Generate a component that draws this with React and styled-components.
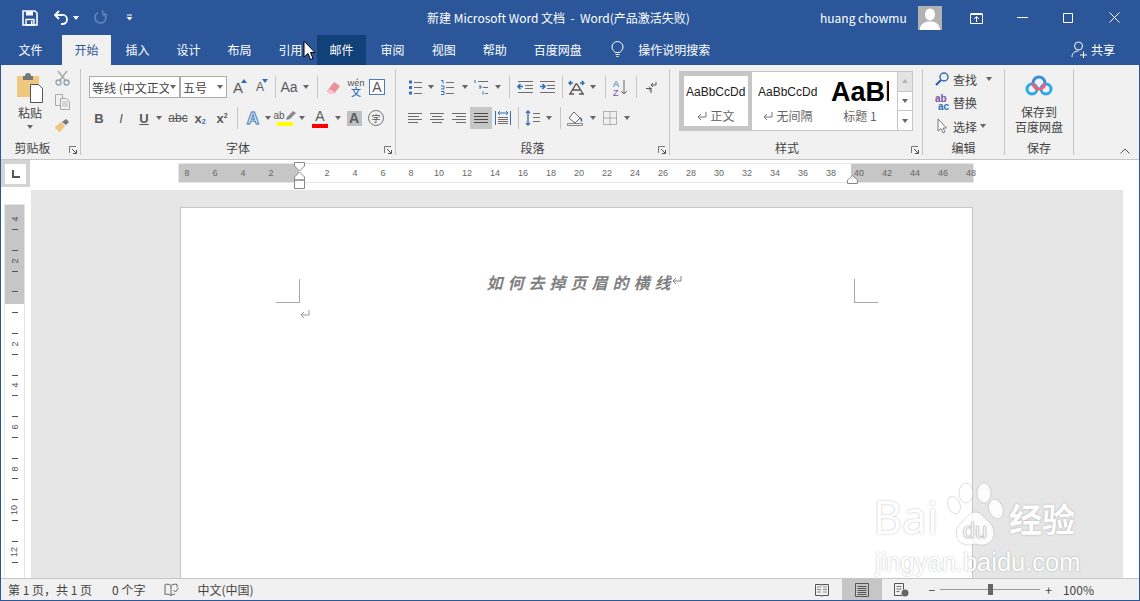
import React from 'react';
import styled, { createGlobalStyle } from 'styled-components';

const BLUE = '#2b579a';
const ICON_BLUE = '#2f6fb5';
const LINE = '#c6c6c6';
const GREY = '#666';

const Global = createGlobalStyle`
  * { box-sizing: border-box; }
  html, body { margin: 0; padding: 0; overflow: hidden; }
  body { font-family: "Noto Sans CJK SC", "Noto Sans", sans-serif; font-size: 12px; color: #444; }
`;

// small drawings

const Svg = ({ w = 16, h = 16, children, ...rest }) => (
  <svg width={w} height={h} viewBox={`0 0 ${w} ${h}`} fill="none" {...rest}>{children}</svg>
);

const Rows = ({ w = 14, h = 14, rows, color = '#6e6e6e' }) => (
  <Svg w={w} h={h}>
    <path d={rows.map(([a, b, y]) => `M${a} ${y + 0.5}H${b}`).join('')} stroke={color} />
  </Svg>
);

const SaveIcon = () => (
  <Svg>
    <path d="M1 1h12l2 2v12H1z" stroke="#fff" strokeWidth="1.6" />
    <path d="M4 1.5h7v4H4z" fill="#fff" />
    <path d="M4 9.5h8V15H4z" stroke="#fff" strokeWidth="1.4" />
    <path d="M9 11h1.5v3H9z" fill="#fff" />
  </Svg>
);

const UndoIcon = () => (
  <Svg w={16} h={15}>
    <path d="M6 1 2 5l4 4" stroke="#fff" strokeWidth="1.8" />
    <path d="M2.5 5H9a4.5 4.5 0 0 1 1 9H8" stroke="#fff" strokeWidth="1.8" />
  </Svg>
);

const RedoIcon = () => (
  <Svg w={14} h={15}>
    <path d="M9.8 3.2A5.5 5.5 0 1 1 4 2.6" stroke="#5f83b9" strokeWidth="1.7" />
    <path d="M9 0v5h4" stroke="#5f83b9" strokeWidth="1.4" transform="rotate(-8 9 4)" />
  </Svg>
);

const CustomizeIcon = () => (
  <Svg w={7} h={7}>
    <path d="M1 1h5" stroke="#fff" />
    <path d="M0.5 3h6L3.5 6.5z" fill="#fff" />
  </Svg>
);

const RestoreIcon = () => (
  <Svg w={13} h={12}>
    <path d="M.5 2.5h12v9H.5zM.5 1.5h12" stroke="#fff" />
    <path d="M6.5 10V5M4 7l2.5-2.5L9 7" stroke="#fff" />
  </Svg>
);

const MinIcon = () => <Svg w={11} h={3}><path d="M0 1.5h11" stroke="#fff" /></Svg>;
const MaxIcon = () => <Svg w={10} h={10}><path d="M.5.5h9v9h-9z" stroke="#fff" /></Svg>;
const CloseIcon = () => <Svg w={11} h={11}><path d="m.5.5 10 10M10.5.5l-10 10" stroke="#fff" /></Svg>;

const AvatarIcon = () => (
  <Svg w={24} h={24}>
    <rect width="24" height="24" fill="#b2b2b2" />
    <ellipse cx="12" cy="8.5" rx="5" ry="6" fill="#fff" />
    <path d="M2 24c0-6 4-7 7-8.5h6c3 1.5 7 2.500 7 8.500z" fill="#fff" />
  </Svg>
);

const BulbIcon = () => (
  <Svg w={13} h={17}>
    <path d="M4 11.500C3 9.500 1 9 1 6a5.500 5.500 0 0 1 11 0c0 3-2 3.500-3 5.500z" stroke="#fff" />
    <path d="M4.500 13.500h4M5.500 15.500h2" stroke="#fff" />
  </Svg>
);

const ShareIcon = () => (
  <Svg w={17} h={17}>
    <circle cx="7.500" cy="5" r="4" stroke="#fff" />
    <path d="M1 16c0-4 3-6 6.500-6M9 14h7M12.500 10.500v7" stroke="#fff" />
  </Svg>
);

const CursorIcon = () => (
  <Svg w={13} h={21}>
    <path d="M1 1v16l4-3.500 2.500 6 2.500-1-2.500-6H12z" fill="#fff" stroke="#000" />
  </Svg>
);

const PasteIcon = () => (
  <Svg w={29} h={30}>
    <path d="M1 3h22v21H1z" fill="#efc87f" />
    <path d="M7 3h2a3 3 0 0 1 6 0h2v4H7z" fill="#777" />
    <path d="M14.500 11.500h8l4 4v14h-12z" fill="#fff" stroke="#555" />
  </Svg>
);

const CutIcon = () => (
  <Svg w={15} h={16}>
    <path d="m3 1 7 9M12 1 5 10" stroke="#a9a9a9" strokeWidth="1.500" />
    <circle cx="3.500" cy="12.500" r="2.500" stroke="#8ea0ad" strokeWidth="1.300" />
    <circle cx="11.500" cy="12.500" r="2.500" stroke="#8ea0ad" strokeWidth="1.300" />
  </Svg>
);

const CopyIcon = () => (
  <Svg w={15} h={16}>
    <path d="M.5.500h7v11h-7z" fill="#f1f1f1" stroke="#aaa" />
    <path d="M5.500 4.500h6l3 3v8h-9z" fill="#f1f1f1" stroke="#aaa" />
    <path d="M7 8h6M7 10h6M7 12h6" stroke="#bbb" />
  </Svg>
);

const PainterIcon = () => (
  <Svg w={16} h={15}>
    <path d="M1 9 7 4l4 4-5 6-2-1-1-2-1 .500z" fill="#edc57e" />
    <path d="m8 4 4-3 3 3-3 3z" fill="#777" />
  </Svg>
);

const LauncherIcon = () => (
  <Svg w={8} h={8}>
    <path d="M.5 7V.5H7" stroke="#777" />
    <path d="m3 3 4 4M7.500 4v3.500H4" stroke="#555" />
  </Svg>
);

const EraserIcon = () => (
  <Svg w={17} h={17}>
    <path d="m2 12 7-9 6 4-6 8H5z" fill="#ef8f9b" />
    <path d="m2 12 3 3h4l1-1.500-5-3.500z" fill="#f7c9cf" />
  </Svg>
);

const PenMark = () => (
  <Svg w={12} h={11}>
    <path d="m1 10 1-3 6-6 3 2-6 6z" fill="#8a8a8a" />
  </Svg>
);

const BulletIcon = () => (
  <Svg>
    <path d="M1 1.500h3v3H1zM1 7h3v3H1zM1 12.500h3v3H1z" fill={ICON_BLUE} />
    <path d="M6 3.500h8M6 8.500h8M6 14.500h8" stroke="#6e6e6e" />
  </Svg>
);

const NumberIcon = () => (
  <Svg>
    <path d="M1 1.500h2v3M1 7h3v3H1M1 12.500h3v3H1" stroke={ICON_BLUE} />
    <path d="M6 3.500h8M6 8.500h8M6 14.500h8" stroke="#6e6e6e" />
  </Svg>
);

const MultiIcon = () => (
  <Svg>
    <path d="M1 1v3M5 7h2v2H5M9 12.500v3" stroke={ICON_BLUE} />
    <path d="M4 2.500h10M9 8.500h5M11 14.500h3" stroke="#6e6e6e" />
  </Svg>
);

const OutdentIcon = () => (
  <Svg>
    <path d="M6 7.500H1M3.500 5 1 7.500 3.500 10" stroke={ICON_BLUE} strokeWidth="1.600" />
    <path d="M1 2.500h15M8 6.500h8M8 9.500h8M1 13.500h15" stroke="#6e6e6e" />
  </Svg>
);

const IndentIcon = () => (
  <Svg>
    <path d="M1 7.500h5M3.500 5 6 7.500 3.500 10" stroke={ICON_BLUE} strokeWidth="1.600" />
    <path d="M1 2.500h15M8 6.500h8M8 9.500h8M1 13.500h15" stroke="#6e6e6e" />
  </Svg>
);

const ChineseLayoutIcon = () => (
  <Svg w={17} h={16}>
    <path d="M1 4h4M3 2 1 4l2 2M16 4h-4M14 2l2 2-2 2" stroke={ICON_BLUE} strokeWidth="1.400" />
    <path d="M2 15 8 5h1l6 10M5 11h7M1 15h5M11 15h5" stroke="#555" strokeWidth="1.400" />
  </Svg>
);

const SortIcon = () => (
  <Svg w={15} h={17}>
    <text x="0" y="8" fontSize="9" fontFamily="Liberation Sans" fill={ICON_BLUE}>A</text>
    <text x="0" y="16.500" fontSize="9" fontFamily="Liberation Sans" fill="#7b4fa6">Z</text>
    <path d="M11 1v14M8 12l3 3 3-3" stroke="#666" />
  </Svg>
);

const MarksIcon = () => (
  <Svg w={11} h={12}>
    <path d="M10 1v3H5M7 2 5 4l2 2" stroke="#555" />
    <path d="M0 7.500h5M3 5.500l2 2-2 2M5 7v5" stroke="#555" />
  </Svg>
);

const DistributeIcon = () => (
  <Svg w={16} h={16}>
    <path d="M.5 1v14M15.500 1v14" stroke={ICON_BLUE} />
    <path d="M3 3h10M5 1 3 3l2 2M11 1l2 2-2 2" stroke={ICON_BLUE} />
    <path d="M3 7.500h10M3 9.500h10M3 11.500h10M3 13.500h10" stroke="#6e6e6e" />
  </Svg>
);

const SpacingIcon = () => (
  <Svg w={15} h={16}>
    <path d="M3 1v14M1 3l2-2 2 2M1 13l2 2 2-2" stroke={ICON_BLUE} strokeWidth="1.300" />
    <path d="M8 3.500h7M8 7.500h7M8 11.500h7" stroke="#6e6e6e" />
  </Svg>
);

const ShadingIcon = () => (
  <Svg w={17} h={16}>
    <path d="m2 8 5-6 6 6-5 5z" fill="#fff" stroke="#666" />
    <path d="M13 7c2 1 3 3 2 5-1-1-2-2-2-5z" fill={ICON_BLUE} />
    <path d="M.5 13.500h15v2H.500z" stroke="#888" />
  </Svg>
);

const BorderIcon = () => (
  <Svg w={14} h={14}>
    <path d="M.5.500h13v13H.500zM7 .5v13M.5 7h13" stroke="#777" strokeDasharray="1 1" />
  </Svg>
);

const SearchIcon = () => (
  <Svg w={14} h={14}>
    <circle cx="9" cy="5" r="4" stroke={ICON_BLUE} strokeWidth="1.500" />
    <path d="M6 8 1 13" stroke="#2a5d9c" strokeWidth="2" />
  </Svg>
);

const SelectIcon = () => (
  <Svg w={10} h={16}>
    <path d="M1 1v12l3-2.500 2 4.500 2-1-2-4h3.500z" fill="#fff" stroke="#777" />
  </Svg>
);

const CloudIcon = () => (
  <Svg w={28} h={22}>
    <circle cx="7" cy="14" r="5" stroke="#27a8e8" strokeWidth="3" />
    <circle cx="21" cy="14" r="5" stroke="#27a8e8" strokeWidth="3" />
    <path d="M8 8a6 6 0 0 1 12 0" stroke="#2f8fe0" strokeWidth="3" />
    <path d="M8 8a6 6 0 0 0 12 0" stroke="#f25c78" strokeWidth="3" />
  </Svg>
);

const ChevronIcon = () => <Svg w={10} h={6}><path d="m.5 5.500 4.500-4.500 4.500 4.500" stroke="#555" /></Svg>;

const ReadIcon = () => (
  <Svg w={14} h={14}>
    <path d="M.5 1.500h6l.5 1 .5-1h6v11h-6l-.5 1-.5-1h-6z" stroke="#555" />
    <path d="M2 4h4M2 6.500h4M2 9h4M8 4h4M8 6.500h4M8 9h4" stroke="#888" />
  </Svg>
);

const PrintIcon = () => (
  <Svg w={14} h={14}>
    <path d="M.5.500h13v13H.500z" stroke="#555" />
    <path d="M2.500 3.500h9M2.500 5.500h9M2.500 7.500h9M2.500 9.500h9M2.500 11.500h9" stroke="#555" />
  </Svg>
);

const WebIcon = () => (
  <Svg w={15} h={14}>
    <path d="M8 12.500H.5V.500h9v6" stroke="#555" />
    <path d="M2.500 3.500h5M2.500 6h5M2.500 8.500h3" stroke="#777" />
    <circle cx="11" cy="10" r="3.500" fill="#666" />
  </Svg>
);

const ProofIcon = () => (
  <Svg w={15} h={14}>
    <path d="M7 2.500C5 1 3 1 1 1.500v10c2-.5 4-.5 6 1 1.500-1 3-1.300 4-1.400M7 2.500v10M7 2.500C9 1 11 1 13 1.500v3" stroke="#666" />
    <path d="m9.500 7 2 2 3-4" stroke="#666" />
  </Svg>
);

const ReturnMark = ({ color = '#9a9a9a' }) => (
  <Svg w={10} h={9}>
    <path d="M9 0v5H1M4 2 1 5l3 3" stroke={color} />
  </Svg>
);

const MarkerTop = () => (
  <Svg w={11} h={27}>
    <path d="M.5.500h10V4l-5 5-5-5zM5.500 10l5 5v3H.500v-3zM.5 18h10v8.500H.500z" fill="#fff" stroke="#888" />
  </Svg>
);

const MarkerRight = () => (
  <Svg w={11} h={9}>
    <path d="m5.500.5 5 4.500v3.500H.500V5z" fill="#fff" stroke="#888" />
  </Svg>
);

// window frame

const Window = styled.div`
  position: relative;
  display: flex;
  flex-direction: column;
  width: 1140px;
  height: 601px;
  background: #fff;
  border: 1px solid ${BLUE};
  border-top: 0;
  overflow: hidden;
`;

const TitleBar = styled.header`
  display: flex;
  align-items: center;
  height: 35px;
  flex: none;
  background: ${BLUE};
  color: #fff;
`;

const Qat = styled.div`
  display: flex;
  align-items: center;
  width: 426px;
  padding-left: 21px;
`;

const QatSlot = styled.span`
  display: flex;
  align-items: center;
  margin-right: ${p => p.$mr || 0}px;
`;

const Caption = styled.div`
  width: 393px;
  font-size: 12px;
  white-space: pre;
`;

const UserName = styled.div`
  width: 98px;
  font-size: 12px;
`;

const UserPic = styled.div`
  display: flex;
  width: 35px;
`;

const WinButton = styled.div`
  display: flex;
  align-items: center;
  justify-content: center;
  width: 46px;
  height: 35px;
`;

const TabStrip = styled.nav`
  display: flex;
  align-items: stretch;
  gap: 2px;
  height: 30px;
  flex: none;
  padding-left: 5px;
  background: ${BLUE};
  color: #fff;
`;

const Tab = styled.div`
  display: flex;
  align-items: center;
  justify-content: center;
  padding: 0 12.5px 2px;
  margin-right: ${p => p.$mr || 0}px;
  font-size: 12px;
  background: ${p => (p.$active ? '#f1f1f1' : p.$hover ? '#124078' : 'transparent')};
  color: ${p => (p.$active ? BLUE : '#fff')};
`;

const TellMe = styled.div`
  display: flex;
  align-items: center;
  gap: 14px;
  margin-left: 15px;
  padding-bottom: 2px;
`;

const Share = styled.div`
  display: flex;
  align-items: center;
  gap: 3px;
  margin-left: auto;
  padding: 0 24px 2px 0;
`;

// ribbon

const Ribbon = styled.div`
  display: flex;
  height: 95px;
  flex: none;
  padding: 4px 0 4px;
  background: #f1f1f1;
  border-bottom: 1px solid ${LINE};
`;

const Group = styled.section`
  position: relative;
  display: flex;
  flex-direction: column;
  flex: none;
  width: ${p => p.$w}px;
  border-right: 1px solid ${LINE};
`;

const GroupBody = styled.div`
  flex: 1;
  display: flex;
  min-height: 0;
`;

const GroupLabel = styled.div`
  height: 14px;
  line-height: 14px;
  text-align: center;
  font-size: 12px;
  color: #444;
  padding-right: ${p => p.$pr || 0}px;
`;

const Launcher = styled.span`
  position: absolute;
  right: 3px;
  bottom: 1px;
  display: flex;
`;

const PasteCol = styled.div`
  display: flex;
  flex-direction: column;
  align-items: center;
  width: 50px;
  margin-left: 4px;
  padding-top: 4px;
`;

const PasteLabel = styled.div`
  margin-top: 1px;
  line-height: 18px;
  color: #444;
`;

const SideCol = styled.div`
  display: flex;
  flex-direction: column;
  align-items: center;
  gap: 8px;
  width: 14px;
  padding-top: 1px;
`;

const ToolStack = styled.div`
  display: flex;
  flex-direction: column;
  gap: 9px;
  padding: 7px 0 0 8px;
`;

const ToolRow = styled.div`
  display: flex;
  align-items: center;
  height: 22px;
`;

const Tool = styled.span`
  position: relative;
  display: flex;
  flex-direction: column;
  align-items: center;
  justify-content: center;
  flex: none;
  width: ${p => p.$w}px;
  height: 22px;
  background: ${p => (p.$on ? LINE : 'transparent')};
`;

const Caret = styled.span`
  display: flex;
  justify-content: center;
  flex: none;
  width: 8px;
  &::after {
    content: '';
    border: 3.5px solid transparent;
    border-top: 4px solid ${GREY};
    border-bottom: 0;
  }
`;

const ToolSep = styled.i`
  flex: none;
  width: 1px;
  height: 22px;
  margin-left: ${p => p.$l || 0}px;
  margin-right: ${p => p.$r || 0}px;
  background: ${LINE};
`;

const Combo = styled.div`
  display: flex;
  align-items: center;
  flex: none;
  width: ${p => p.$w}px;
  height: 22px;
  padding: 0 2px;
  background: #fff;
  border: 1px solid #ababab;
  margin-left: ${p => p.$ml || 0}px;
`;

const ComboText = styled.span`
  flex: 1;
  overflow: hidden;
  white-space: nowrap;
  color: #444;
`;

const Letter = styled.span`
  font-family: "Liberation Sans", sans-serif;
  font-size: ${p => p.$size || 13}px;
  font-weight: ${p => (p.$bold ? 700 : 400)};
  font-style: ${p => (p.$italic ? 'italic' : 'normal')};
  text-decoration: ${p => p.$line || 'none'};
  color: ${p => p.$color || '#5a5a5a'};
  line-height: 1;
`;

const Sub = styled.sub`
  font-size: 7px;
  color: ${ICON_BLUE};
  vertical-align: -1px;
`;

const Sup = styled.sup`
  font-size: 7px;
  color: #555;
  vertical-align: 5px;
`;

const Nudge = styled.i`
  position: absolute;
  top: 3px;
  right: ${p => p.$r}px;
  border: 3px solid transparent;
  border-bottom: 4px solid ${ICON_BLUE};
  border-top: 0;
  transform: ${p => (p.$down ? 'scaleY(-1)' : 'none')};
`;

const Boxed = styled.span`
  display: flex;
  align-items: center;
  justify-content: center;
  width: 16px;
  height: 16px;
  background: #fff;
  border: 1px solid #4a7ebb;
`;

const Wen = styled.span`
  display: flex;
  flex-direction: column;
  align-items: center;
  font-size: 9px;
  line-height: 9px;
  color: #555;
  b {
    font-weight: 500;
    font-size: 10px;
    line-height: 10px;
    color: ${ICON_BLUE};
  }
`;

const OutlineA = styled.span`
  font-family: "Liberation Sans", sans-serif;
  font-size: 17px;
  font-weight: 700;
  color: #fff;
  -webkit-text-stroke: 1px #4a7ebb;
  text-shadow: 0 0 2px #a9c4e4;
  line-height: 1;
`;

const ColorBar = styled.i`
  width: 16px;
  height: 4px;
  margin-top: 1px;
  background: ${p => p.$color};
`;

const Shaded = styled.span`
  display: flex;
  align-items: center;
  justify-content: center;
  width: 15px;
  height: 15px;
  background: #c0c0c0;
`;

const Ringed = styled.span`
  display: flex;
  align-items: center;
  justify-content: center;
  width: 16px;
  height: 16px;
  font-size: 9px;
  color: #555;
  border: 1px solid #777;
  border-radius: 50%;
`;

const Gallery = styled.div`
  display: flex;
  height: 60px;
  margin: 2px 0 0 9px;
  background: #fff;
  border: 1px solid ${LINE};
`;

const StyleCell = styled.div`
  display: flex;
  flex-direction: column;
  align-items: center;
  width: ${p => p.$w}px;
  flex: none;
  border: ${p => (p.$on ? `4px solid ${LINE}` : '4px solid transparent')};
  overflow: hidden;
`;

const StylePreview = styled.div`
  display: flex;
  align-items: center;
  justify-content: flex-start;
  width: ${p => p.$w}px;
  height: 32px;
  overflow: hidden;
  white-space: nowrap;
  font-family: "Liberation Sans", sans-serif;
  font-size: ${p => p.$size}px;
  font-weight: ${p => (p.$bold ? 700 : 400)};
  color: ${p => (p.$bold ? '#000' : '#222')};
`;

const StyleName = styled.div`
  display: flex;
  align-items: center;
  gap: 3px;
  font-size: 12px;
  line-height: 16px;
  color: #666;
`;

const GalleryScroll = styled.div`
  display: flex;
  flex-direction: column;
  flex: none;
  width: 15px;
  margin-left: auto;
  border-left: 1px solid ${LINE};
`;

const ScrollBtn = styled.div`
  display: flex;
  align-items: center;
  justify-content: center;
  flex: 1;
  background: ${p => (p.$off ? '#e4e4e4' : '#fff')};
  & + & {
    border-top: 1px solid ${LINE};
  }
`;

const EditStack = styled.div`
  display: flex;
  flex-direction: column;
  gap: 3.5px;
  padding-left: 12px;
`;

const EditRow = styled.div`
  display: flex;
  align-items: center;
  height: 20px;
  font-size: 12px;
  color: #444;
`;

const EditIcon = styled.span`
  display: flex;
  justify-content: center;
  width: 14px;
  margin-right: 4px;
`;

const AbAc = styled.span`
  display: flex;
  flex-direction: column;
  font-family: "Liberation Sans", sans-serif;
  font-size: 10px;
  line-height: 8px;
  font-weight: 700;
  color: #7b4fa6;
  b {
    color: ${ICON_BLUE};
    margin-left: 3px;
  }
`;

const SaveCol = styled.div`
  display: flex;
  flex-direction: column;
  align-items: center;
  width: 100%;
  padding-top: 6px;
  text-align: center;
  line-height: 15px;
  color: #444;
  svg {
    margin-bottom: 7px;
  }
`;

const RibbonEnd = styled.div`
  flex: 1;
  display: flex;
  justify-content: flex-end;
  align-items: flex-end;
  padding: 0 9px 1px 0;
`;

// rulers

const RulerBar = styled.div`
  display: flex;
  height: 30px;
  flex: none;
  background: #fff;
`;

const RulerCorner = styled.div`
  display: flex;
  align-items: center;
  justify-content: center;
  width: 29px;
  height: 27px;
  flex: none;
  background: #d4d4d4;
`;

const CornerInner = styled.div`
  display: flex;
  align-items: center;
  justify-content: center;
  width: 21px;
  height: 20px;
  background: #fff;
  &::after {
    content: '';
    width: 6px;
    height: 6px;
    border-left: 2px solid #555;
    border-bottom: 2px solid #555;
  }
`;

const HRuler = styled.div`
  position: relative;
  display: flex;
  width: 794px;
  height: 18px;
  margin: 4px 0 0 149px;
  background: linear-gradient(to right, ${LINE} 120px, #fff 120px, #fff 672px, ${LINE} 672px);
  box-shadow: 0 0 0 1px #e6e6e6;
`;

const HRulerScale = styled.div`
  display: flex;
  margin-left: -6px;
`;

const HTick = styled.span`
  width: 28px;
  flex: none;
  text-align: center;
  line-height: 18px;
  font-family: "Liberation Sans", sans-serif;
  font-size: 9px;
  color: #666;
`;

const Marker = styled.span`
  position: absolute;
  display: flex;
  left: ${p => p.$x}px;
  top: ${p => p.$y}px;
`;

const Workspace = styled.div`
  display: flex;
  flex: 1;
  min-height: 0;
  background: #fff;
`;

const VRulerCol = styled.div`
  width: 30px;
  flex: none;
  padding: 15px 0 0 4px;
`;

const VRuler = styled.div`
  display: flex;
  flex-direction: column;
  align-items: center;
  width: 19px;
  height: 100%;
  padding-top: 9px;
  overflow: hidden;
  background: linear-gradient(to bottom, ${LINE} 99px, #fff 99px);
  box-shadow: 0 0 0 1px #e6e6e6;
`;

const VSlot = styled.div`
  display: flex;
  align-items: center;
  justify-content: center;
  flex: none;
  height: 10.4px;
  font-family: "Liberation Sans", sans-serif;
  font-size: 9px;
  color: #555;
  span {
    transform: rotate(-90deg);
    white-space: nowrap;
  }
  i {
    width: 6px;
    height: 1px;
    background: #555;
  }
`;

const DocArea = styled.main`
  width: 1092px;
  flex: none;
  padding: 17px 0 0 149px;
  overflow: hidden;
  background: #e6e6e6;
`;

const Page = styled.article`
  width: 793px;
  height: 500px;
  padding: 71px 94px 0 95px;
  background: #fff;
  border: 1px solid ${LINE};
`;

const PageHead = styled.div`
  display: grid;
  grid-template-columns: 24px 1fr 24px;
`;

const CropMark = styled.div`
  height: 24px;
  border-bottom: 1px solid #a6a6a6;
  border-${p => (p.$right ? 'left' : 'right')}: 1px solid #a6a6a6;
`;

const DocTitle = styled.h1`
  display: flex;
  align-items: flex-start;
  justify-content: center;
  margin: -9px 0 0;
  padding-left: 14px;
  font-size: 16px;
  line-height: 24px;
  font-weight: 700;
  font-style: italic;
  letter-spacing: 5px;
  color: #808080;
  svg {
    margin: 6px 0 0 -4px;
  }
`;

const EmptyPara = styled.p`
  display: flex;
  margin: 7px 0 0 24px;
`;

// status bar

const StatusBar = styled.footer`
  display: flex;
  align-items: center;
  height: 22px;
  flex: none;
  padding-left: 7px;
  background: #f1f1f1;
  border-top: 1px solid ${LINE};
  font-size: 12px;
  color: #444;
`;

const StatusItem = styled.span`
  display: flex;
  align-items: center;
  margin-left: ${p => p.$ml || 0}px;
  white-space: pre;
`;

const ViewBtn = styled.span`
  display: flex;
  align-items: center;
  justify-content: center;
  width: 40px;
  height: 21px;
  background: ${p => (p.$on ? LINE : 'transparent')};
`;

const Zoom = styled.div`
  position: relative;
  width: 100px;
  height: 1px;
  margin: 0 5px;
  background: #999;
  &::after {
    content: '';
    position: absolute;
    left: 48px;
    top: -5px;
    width: 5px;
    height: 11px;
    background: #666;
  }
`;

const Pointer = styled.span`
  position: absolute;
  left: 302px;
  top: 40px;
  display: flex;
`;

// baidu watermark

const Watermark = styled.div`
  position: absolute;
  left: 872px;
  top: 478px;
  width: 210px;
  pointer-events: none;
  color: #fff;
  text-shadow: 0 0 2px rgba(0, 0, 0, 0.3);
`;

const MarkTop = styled.div`
  display: flex;
  align-items: flex-end;
  height: 70px;
`;

const MarkBai = styled.span`
  font-family: "Open Sans", sans-serif;
  font-size: 45px;
  line-height: 62px;
  width: 70px;
`;

const MarkCn = styled.span`
  font-size: 33px;
  line-height: 60px;
  font-weight: 700;
`;

const MarkUrl = styled.div`
  font-family: "Liberation Sans", sans-serif;
  font-size: 25.500px;
  line-height: 28px;
  margin-left: 2px;
`;

const PawMark = () => (
  <svg width="66" height="68" viewBox="0 0 66 68" style={{ flex: 'none' }}>
    <g fill="#fff" fillOpacity="0.85" stroke="#000" strokeOpacity="0.13">
      <ellipse cx="11" cy="25" rx="6" ry="9" transform="rotate(-20 11 25)" />
      <ellipse cx="23" cy="13" rx="7" ry="10" />
      <ellipse cx="41" cy="13" rx="7" ry="10" />
      <ellipse cx="53" cy="29" rx="7" ry="10" transform="rotate(-20 53 29)" />
      <path d="M32 32c6 0 8 5 14 10 7 6 8 21-6 23-4 .5-5-1-8-1s-4 1.500-8 1C10 63 11 48 19 42c5-4 7-10 13-10z" />
    </g>
    <text x="32" y="58" textAnchor="middle" fontFamily="Liberation Sans" fontSize="22" fill="#fff" stroke="#000" strokeOpacity="0.2" strokeWidth="0.6">du</text>
  </svg>
);

const TABS = ['插入', '设计', '布局', '引用', '邮件', '审阅', '视图', '帮助', '百度网盘'];
const H_TICKS = ['8', '6', '4', '2', '', '2', '4', '6', '8', '10', '12', '14', '16', '18', '20', '22', '24', '26', '28', '30', '32', '34', '36', '38', '40', '42', '44', '46', '48'];
const V_TICKS = ['4', '2', '', '2', '4', '6', '8', '10', '12'];

const FontGroup = () => (
  <Group $w={315}>
    <GroupBody>
      <ToolStack>
        <ToolRow>
          <Combo $w={91}><ComboText>等线 (中文正文)</ComboText><Caret /></Combo>
          <Combo $w={47} $ml={0}><ComboText>五号</ComboText><Caret /></Combo>
          <Tool $w={22}><Letter $size={15}>A</Letter><Nudge $r={2} /></Tool>
          <Tool $w={22}><Letter $size={12}>A</Letter><Nudge $r={3} $down /></Tool>
          <ToolSep $l={4} />
          <Tool $w={26}><Letter $size={14}>Aa</Letter></Tool>
          <Caret />
          <ToolSep $l={7} />
          <Tool $w={30}><EraserIcon /></Tool>
          <Tool $w={16}><Wen>wén<b>文</b></Wen></Tool>
          <Tool $w={26}><Boxed><Letter $size={14}>A</Letter></Boxed></Tool>
        </ToolRow>
        <ToolRow>
          <Tool $w={20}><Letter $bold>B</Letter></Tool>
          <Tool $w={24}><Letter $italic>I</Letter></Tool>
          <Tool $w={22}><Letter $bold $line="underline">U</Letter></Tool>
          <Caret />
          <Tool $w={30}><Letter $size={12} $line="line-through">abc</Letter></Tool>
          <Tool $w={14}><Letter $bold>x<Sub>2</Sub></Letter></Tool>
          <Tool $w={30}><Letter $bold>x<Sup>2</Sup></Letter></Tool>
          <ToolSep $r={4} />
          <Tool $w={22}><OutlineA>A</OutlineA></Tool>
          <Caret />
          <Tool $w={26}>
            <ToolRow as="span" style={{ height: 11 }}><Letter $size={10}>ab</Letter><PenMark /></ToolRow>
            <ColorBar $color="#ffff00" />
          </Tool>
          <Caret />
          <Tool $w={28}><Letter $size={14}>A</Letter><ColorBar $color="#ff0000" /></Tool>
          <Caret />
          <Tool $w={24}><Shaded><Letter $size={14} $bold>A</Letter></Shaded></Tool>
          <Tool $w={20}><Ringed>字</Ringed></Tool>
        </ToolRow>
      </ToolStack>
    </GroupBody>
    <GroupLabel>字体</GroupLabel>
    <Launcher><LauncherIcon /></Launcher>
  </Group>
);

const ParagraphGroup = () => (
  <Group $w={274}>
    <GroupBody>
      <ToolStack>
        <ToolRow>
          <Tool $w={23}><BulletIcon /></Tool>
          <Caret />
          <Tool $w={26}><NumberIcon /></Tool>
          <Caret />
          <Tool $w={25}><MultiIcon /></Tool>
          <Caret />
          <ToolSep $l={7} />
          <Tool $w={30}><OutdentIcon /></Tool>
          <Tool $w={14}><IndentIcon /></Tool>
          <ToolSep $l={8} />
          <Tool $w={26}><ChineseLayoutIcon /></Tool>
          <Caret />
          <ToolSep $l={8} />
          <Tool $w={28}><SortIcon /></Tool>
          <ToolSep $l={2} />
          <Tool $w={28}><MarksIcon /></Tool>
        </ToolRow>
        <ToolRow>
          <Tool $w={22}><Rows rows={[[0, 14, 2], [0, 11, 5], [0, 14, 8], [0, 10, 11]]} /></Tool>
          <Tool $w={22}><Rows rows={[[0, 14, 2], [2, 12, 5], [0, 14, 8], [2, 12, 11]]} /></Tool>
          <Tool $w={22}><Rows rows={[[0, 14, 2], [4, 14, 5], [0, 14, 8], [4, 14, 11]]} /></Tool>
          <Tool $w={22} $on><Rows rows={[[0, 14, 2], [0, 14, 5], [0, 14, 8], [0, 14, 11]]} color="#4a4a4a" /></Tool>
          <Tool $w={22}><DistributeIcon /></Tool>
          <ToolSep $l={4} />
          <Tool $w={26}><SpacingIcon /></Tool>
          <Caret />
          <ToolSep $l={7} />
          <Tool $w={28}><ShadingIcon /></Tool>
          <Caret />
          <Tool $w={26}><BorderIcon /></Tool>
          <Caret />
        </ToolRow>
      </ToolStack>
    </GroupBody>
    <GroupLabel>段落</GroupLabel>
    <Launcher><LauncherIcon /></Launcher>
  </Group>
);

const StylesGroup = () => (
  <Group $w={253}>
    <GroupBody>
      <Gallery style={{ width: 234 }}>
        <StyleCell $w={72} $on>
          <StylePreview $w={60} $size={12}>AaBbCcDd</StylePreview>
          <StyleName><ReturnMark color="#777" />正文</StyleName>
        </StyleCell>
        <StyleCell $w={72}>
          <StylePreview $w={60} $size={12}>AaBbCcDd</StylePreview>
          <StyleName><ReturnMark color="#777" />无间隔</StyleName>
        </StyleCell>
        <StyleCell $w={72}>
          <StylePreview $w={58} $size={27} $bold>AaBb</StylePreview>
          <StyleName>标题 1</StyleName>
        </StyleCell>
        <GalleryScroll>
          <ScrollBtn $off><Caret style={{ transform: 'scaleY(-1)', opacity: 0.4 }} /></ScrollBtn>
          <ScrollBtn><Caret /></ScrollBtn>
          <ScrollBtn><Caret /></ScrollBtn>
        </GalleryScroll>
      </Gallery>
    </GroupBody>
    <GroupLabel $pr={18}>样式</GroupLabel>
    <Launcher><LauncherIcon /></Launcher>
  </Group>
);

const EditGroup = () => (
  <Group $w={82}>
    <GroupBody>
      <EditStack>
        <EditRow><EditIcon><SearchIcon /></EditIcon>查找<Caret style={{ marginLeft: 8 }} /></EditRow>
        <EditRow><EditIcon><AbAc>ab<b>ac</b></AbAc></EditIcon>替换</EditRow>
        <EditRow><EditIcon><SelectIcon /></EditIcon>选择<Caret style={{ marginLeft: 2 }} /></EditRow>
      </EditStack>
    </GroupBody>
    <GroupLabel>编辑</GroupLabel>
  </Group>
);

const StatusRight = () => (
  <>
    <StatusItem $ml={548}><ViewBtn><ReadIcon /></ViewBtn></StatusItem>
    <ViewBtn $on><PrintIcon /></ViewBtn>
    <ViewBtn><WebIcon /></ViewBtn>
    <StatusItem $ml={7}>−</StatusItem>
    <Zoom />
    <StatusItem>+</StatusItem>
    <StatusItem $ml={11}>100%</StatusItem>
  </>
);

export default function App() {
  return (
    <Window>
      <Global />
      <TitleBar>
        <Qat>
          <QatSlot $mr={15}><SaveIcon /></QatSlot>
          <QatSlot $mr={3}><UndoIcon /></QatSlot>
          <QatSlot $mr={14}><Caret style={{ filter: 'brightness(3)' }} /></QatSlot>
          <QatSlot $mr={18}><RedoIcon /></QatSlot>
          <QatSlot><CustomizeIcon /></QatSlot>
        </Qat>
        <Caption>新建 Microsoft Word 文档  -  Word(产品激活失败)</Caption>
        <UserName>huang chowmu</UserName>
        <UserPic><AvatarIcon /></UserPic>
        <WinButton><RestoreIcon /></WinButton>
        <WinButton><MinIcon /></WinButton>
        <WinButton><MaxIcon /></WinButton>
        <WinButton><CloseIcon /></WinButton>
      </TitleBar>

      <TabStrip>
        <Tab $mr={5}>文件</Tab>
        <Tab $active>开始</Tab>
        {TABS.map(t => <Tab key={t} $hover={t === '邮件'}>{t}</Tab>)}
        <TellMe><BulbIcon />操作说明搜索</TellMe>
        <Share><ShareIcon />共享</Share>
      </TabStrip>

      <Ribbon>
        <Group $w={80}>
          <GroupBody>
            <PasteCol>
              <PasteIcon />
              <PasteLabel>粘贴</PasteLabel>
              <Caret style={{ marginTop: 3 }} />
            </PasteCol>
            <SideCol>
              <CutIcon />
              <CopyIcon />
              <PainterIcon />
            </SideCol>
          </GroupBody>
          <GroupLabel $pr={16}>剪贴板</GroupLabel>
          <Launcher><LauncherIcon /></Launcher>
        </Group>
        <FontGroup />
        <ParagraphGroup />
        <StylesGroup />
        <EditGroup />
        <Group $w={69}>
          <GroupBody>
            <SaveCol>
              <CloudIcon />
              保存到<br />百度网盘
            </SaveCol>
          </GroupBody>
          <GroupLabel>保存</GroupLabel>
        </Group>
        <RibbonEnd><ChevronIcon /></RibbonEnd>
      </Ribbon>

      <RulerBar>
        <RulerCorner><CornerInner /></RulerCorner>
        <HRuler>
          <HRulerScale>
            {H_TICKS.map((t, i) => <HTick key={i}>{t}</HTick>)}
          </HRulerScale>
          <Marker $x={115} $y={-2}><MarkerTop /></Marker>
          <Marker $x={668} $y={11}><MarkerRight /></Marker>
        </HRuler>
      </RulerBar>

      <Workspace>
        <VRulerCol>
          <VRuler>
            {V_TICKS.map((t, i) => (
              <React.Fragment key={i}>
                <VSlot><span>{t}</span></VSlot>
                <VSlot><i /></VSlot>
                <VSlot />
                <VSlot><i /></VSlot>
              </React.Fragment>
            ))}
          </VRuler>
        </VRulerCol>
        <DocArea>
          <Page>
            <PageHead>
              <CropMark />
              <DocTitle>如何去掉页眉的横线<ReturnMark color="#808080" /></DocTitle>
              <CropMark $right />
            </PageHead>
            <EmptyPara><ReturnMark /></EmptyPara>
          </Page>
        </DocArea>
      </Workspace>

      <StatusBar>
        <StatusItem>第 1 页，共 1 页</StatusItem>
        <StatusItem $ml={20}>0 个字</StatusItem>
        <StatusItem $ml={19}><ProofIcon /></StatusItem>
        <StatusItem $ml={18}>中文(中国)</StatusItem>
        <StatusRight />
      </StatusBar>

      <Pointer><CursorIcon /></Pointer>
      <Watermark>
        <MarkTop>
          <MarkBai>Bai</MarkBai>
          <PawMark />
          <MarkCn>经验</MarkCn>
        </MarkTop>
        <MarkUrl>jingyan.baidu.com</MarkUrl>
      </Watermark>
    </Window>
  );
}
